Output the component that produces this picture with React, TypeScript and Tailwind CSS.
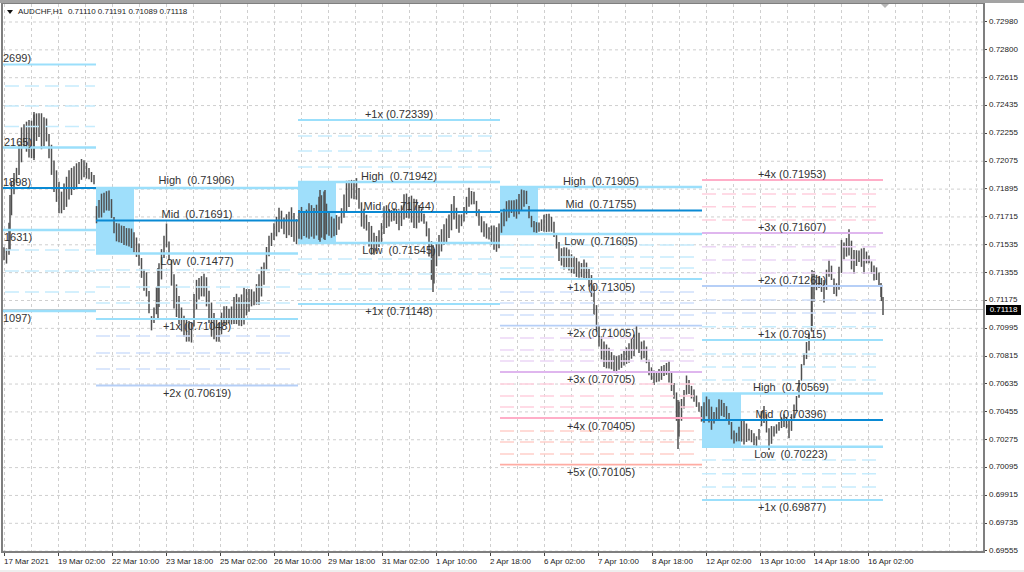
// App.tsx - AUDCHF H1 chart with session range levels
import React from 'react';

const FONT = "[font-family:'Liberation_Sans',Arial,sans-serif]";

const PRICES = ['0.72980', '0.72800', '0.72615', '0.72435', '0.72255', '0.72075', '0.71895', '0.71715', '0.71535', '0.71355', '0.71175', '0.70995', '0.70815', '0.70635', '0.70455', '0.70275', '0.70095', '0.69915', '0.69735', '0.69555'];
const DATES = ['17 Mar 2021', '19 Mar 02:00', '22 Mar 10:00', '23 Mar 18:00', '25 Mar 02:00', '26 Mar 10:00', '29 Mar 18:00', '31 Mar 02:00', '1 Apr 10:00', '2 Apr 18:00', '6 Apr 02:00', '7 Apr 10:00', '8 Apr 18:00', '12 Apr 02:00', '13 Apr 10:00', '14 Apr 18:00', '16 Apr 02:00'];

// x, top, bottom of the price action, read off the chart
const TRACE: [number, number, number][] = [
  [4, 245, 262], [8, 248, 265], [10, 195, 250], [12, 170, 205], [16, 170, 188], [20, 130, 175], [24, 120, 150], [28, 118, 160], [34, 112, 160], [38, 110, 135], [42, 112, 155], [46, 115, 140], [50, 135, 170], [54, 160, 195], [58, 175, 215], [62, 190, 217], [66, 175, 210], [72, 165, 195], [76, 160, 190], [80, 158, 185], [84, 157, 180], [88, 165, 180], [94, 175, 185],
  [96, 205, 225], [100, 195, 220], [104, 190, 215], [110, 188, 212], [115, 222, 240], [124, 225, 248], [133, 228, 250], [135, 230, 255], [140, 245, 270], [143, 265, 290], [147, 270, 300], [150, 295, 325], [152, 320, 336], [155, 300, 320], [158, 268, 318], [163, 240, 265], [166, 218, 245], [170, 245, 270], [173, 270, 310], [177, 285, 320], [182, 305, 335], [186, 318, 345], [192, 320, 345], [195, 280, 320], [200, 277, 297], [205, 270, 300], [210, 290, 335], [213, 305, 340], [218, 325, 345], [222, 310, 335], [225, 300, 325], [230, 310, 325], [236, 288, 325], [240, 300, 328], [244, 285, 328], [250, 287, 310], [255, 290, 305], [260, 270, 305], [264, 260, 285], [268, 235, 265], [272, 230, 245], [276, 215, 240], [280, 205, 230], [284, 215, 235], [288, 210, 240], [292, 203, 240], [296, 220, 245],
  [300, 205, 240], [305, 210, 240], [310, 200, 240], [315, 205, 240], [320, 190, 242], [325, 190, 240], [330, 215, 240], [335, 215, 240], [340, 215, 230], [346, 178, 215], [352, 180, 200], [357, 175, 200], [362, 205, 230], [366, 212, 230], [370, 220, 255], [376, 235, 255], [381, 225, 245], [385, 200, 235], [390, 210, 225], [395, 205, 220], [400, 210, 235], [404, 190, 220], [410, 195, 220], [415, 195, 235], [420, 205, 220], [425, 215, 225], [430, 230, 270], [433, 245, 292], [437, 240, 265], [442, 225, 250], [448, 215, 245], [454, 195, 220], [458, 215, 235], [463, 212, 225], [468, 186, 210], [474, 190, 205], [478, 205, 225], [484, 220, 238], [488, 225, 240], [494, 225, 250], [498, 225, 253],
  [502, 210, 235], [507, 200, 220], [512, 198, 215], [516, 200, 220], [522, 188, 210], [527, 190, 205], [530, 212, 225], [535, 222, 235], [540, 222, 232], [545, 212, 235], [548, 212, 232], [553, 215, 235], [556, 232, 248], [560, 245, 268], [565, 245, 270], [570, 250, 272], [575, 255, 278], [580, 262, 280], [585, 258, 280], [590, 270, 290], [595, 285, 325], [598, 320, 340], [601, 335, 360], [604, 340, 370], [608, 345, 372], [612, 352, 372], [616, 355, 375], [620, 355, 370], [624, 350, 368], [628, 345, 365], [632, 335, 360], [637, 325, 350], [641, 340, 360], [645, 337, 360], [650, 365, 380], [654, 368, 385], [658, 370, 383], [662, 365, 380], [666, 362, 375], [670, 360, 390], [673, 380, 395], [676, 385, 415], [678, 400, 449], [682, 397, 420], [687, 373, 393], [692, 385, 400], [695, 390, 405], [698, 400, 410], [701, 405, 420],
  [703, 400, 430], [707, 393, 417], [711, 403, 435], [715, 412, 422], [720, 393, 420], [723, 400, 417], [728, 407, 422], [733, 427, 447], [737, 433, 442], [743, 413, 447], [748, 427, 440], [753, 430, 445], [758, 438, 448], [760, 418, 433], [763, 400, 420], [766, 410, 430], [769, 427, 452], [773, 425, 440], [778, 423, 432], [783, 413, 427], [787, 417, 430], [790, 420, 443], [793, 407, 423], [797, 393, 410], [800, 370, 393], [803, 355, 370], [807, 340, 360], [810, 327, 350], [812, 270, 327], [815, 270, 293], [820, 277, 287], [824, 277, 303], [828, 263, 283], [830, 255, 275], [835, 283, 300], [838, 280, 297], [841, 238, 277], [845, 243, 257], [849, 228, 257], [853, 248, 280], [858, 250, 260], [864, 247, 275], [868, 252, 260], [873, 263, 280], [878, 267, 283], [881, 283, 297], [883, 297, 315],
];

// small seeded generator so the bars come out the same every time
const rand = (seed: number) => {
  const s = Math.sin(seed * 127.1) * 43758.5453;
  return s - Math.floor(s);
};

const buildBars = () => {
  const bars: { x: number; t: number; b: number }[] = [];
  let i = 0;
  for (let x = 4; x <= 883; x += 2.5) {
    while (i < TRACE.length - 2 && TRACE[i + 1][0] < x) i++;
    const [x0, t0, b0] = TRACE[i];
    const [x1, t1, b1] = TRACE[i + 1];
    const k = Math.min(1, Math.max(0, (x - x0) / (x1 - x0)));
    const t = t0 + (t1 - t0) * k;
    const b = b0 + (b1 - b0) * k;
    const span = b - t;
    bars.push({ x, t: t + rand(x) * span * 0.15, b: b - rand(x + 3.7) * span * 0.15 });
  }
  // keep the long wicks and the last bars where they really are
  TRACE.filter(([x, t, b]) => b - t > 45 || x > 878).forEach(([x, t, b]) => bars.push({ x, t, b }));
  return bars;
};

const SKY = '#9bdffb';
const SKY_D = '#c6ecfd';
const MID = '#0a8ad4';
const PERI = '#b6cff7';
const PERI_D = '#cfe0fb';
const LILAC = '#dfb6ee';
const LILAC_D = '#ecd6f6';
const PINK = '#ffaec8';
const PINK_D = '#ffd0de';
const SALMON = '#ffaca3';
const SALMON_D = '#ffcfca';

type Col = {
  x1: number;
  x2: number;
  dashEnd: number;
  box?: [number, number, number, number];
  solid: [number, string, number][];
  dashed: [number, string][];
};

const COLS: Col[] = [
  {
    x1: -115, x2: 96, dashEnd: 95,
    solid: [[64.5, SKY, 1.8], [147.5, SKY, 2.4], [188, MID, 1.8], [230, SKY, 2.4], [311, SKY, 2.4]],
    dashed: [[86, SKY_D], [106, SKY_D], [126.5, SKY_D], [250, SKY_D], [271, SKY_D], [292, SKY_D]],
  },
  {
    x1: 96, x2: 298, dashEnd: 292, box: [96, 188, 134, 254],
    solid: [[188, SKY, 2.4], [220.5, MID, 1.8], [253.5, SKY, 2.4], [319, SKY, 1.8], [385.5, PERI, 1.8]],
    dashed: [[270, SKY_D], [287, SKY_D], [303, SKY_D], [336, PERI_D], [353, PERI_D], [369, PERI_D]],
  },
  {
    x1: 298, x2: 500, dashEnd: 494, box: [298, 182, 336, 243],
    solid: [[120, SKY, 1.8], [182, SKY, 2.4], [212, MID, 1.8], [243, SKY, 2.4], [304, SKY, 1.8]],
    dashed: [[136, SKY_D], [151, SKY_D], [167, SKY_D], [259, SKY_D], [274, SKY_D], [289, SKY_D]],
  },
  {
    x1: 500, x2: 702, dashEnd: 696, box: [500, 187, 538, 235],
    solid: [[187, SKY, 2.4], [210.5, MID, 1.8], [234, SKY, 2.4], [279, SKY, 1.8], [325.7, PERI, 1.8], [372, LILAC, 1.8], [418, PINK, 1.8], [464.7, SALMON, 1.8]],
    dashed: [[245, SKY_D], [257, SKY_D], [268, SKY_D], [292, PERI_D], [303, PERI_D], [315, PERI_D], [338, LILAC_D], [350, LILAC_D], [361, LILAC_D], [384, PINK_D], [396, PINK_D], [407, PINK_D], [431, SALMON_D], [442, SALMON_D], [454, SALMON_D]],
  },
  {
    x1: 702, x2: 883, dashEnd: 879, box: [702, 393, 741, 447],
    solid: [[180, PINK, 1.8], [233, LILAC, 1.8], [286, PERI, 1.8], [340, SKY, 1.8], [393.5, SKY, 2.4], [420, MID, 1.8], [446.7, SKY, 2.4], [500, SKY, 1.8]],
    dashed: [[194, PINK_D], [206.7, PINK_D], [220, PINK_D], [246.7, LILAC_D], [260, LILAC_D], [273, LILAC_D], [300, PERI_D], [313, PERI_D], [326.7, SKY_D], [354, SKY_D], [367, SKY_D], [380, SKY_D], [460, SKY_D], [473.7, SKY_D], [487, SKY_D]],
  },
];

// centre x, centre y, text - the first five are what is left of labels running off the left edge
const LABELS: [number, number, string][] = [
  [17, 58, '2699)'], [18, 142, '2165)'], [17, 182, '1898)'], [18, 237, '1631)'], [17, 318, '1097)'],
  [196.5, 180, 'High  (0.71906)'], [197, 214, 'Mid  (0.71691)'], [197, 260.5, 'Low  (0.71477)'], [197, 326, '+1x (0.71048)'], [197, 392.5, '+2x (0.70619)'],
  [399, 114, '+1x (0.72339)'], [399, 176, 'High  (0.71942)'], [399, 206, 'Mid  (0.71744)'], [399, 250, 'Low  (0.71545)'], [399, 311, '+1x (0.71148)'],
  [601, 180.5, 'High  (0.71905)'], [601, 204, 'Mid  (0.71755)'], [601, 241, 'Low  (0.71605)'], [601, 286.5, '+1x (0.71305)'], [601, 332.5, '+2x (0.71005)'], [601, 379, '+3x (0.70705)'], [601, 425.5, '+4x (0.70405)'], [601, 472, '+5x (0.70105)'],
  [792, 174, '+4x (0.71953)'], [792, 227, '+3x (0.71607)'], [792, 280, '+2x (0.71261)'], [792, 334, '+1x (0.70915)'], [791, 387, 'High  (0.70569)'], [791, 414, 'Mid  (0.70396)'], [791, 454, 'Low  (0.70223)'], [792, 507, '+1x (0.69877)'],
];

const GRID_X = Array.from({ length: 37 }, (_, i) => 4 + 27 * i);
const GRID_Y = PRICES.map((_, i) => 22 + 27.85 * i);

const Chart = () => {
  const bars = buildBars();
  return (
    <svg viewBox="3 4 980 547" width={980} height={547} className="block">
      {GRID_X.map((x) => (
        <line key={x} x1={x + 0.5} x2={x + 0.5} y1={4} y2={551} stroke="#cfcfcf" strokeDasharray="3 3" />
      ))}
      {GRID_Y.map((y) => (
        <line key={y} x1={3} x2={983} y1={y} y2={y} stroke="#cfcfcf" strokeDasharray="3 3" />
      ))}
      <line x1={3} x2={983} y1={309.5} y2={309.5} stroke="#c9c9c9" />
      {COLS.map((c) =>
        c.box ? (
          <rect key={c.x1} x={c.box[0]} y={c.box[1]} width={c.box[2] - c.box[0]} height={c.box[3] - c.box[1]} fill="#9fdffb" />
        ) : null,
      )}
      {bars.map((b, i) => (
        <line key={i} x1={b.x} x2={b.x} y1={b.t} y2={b.b} stroke="#4f4f4f" strokeWidth={1.5} />
      ))}
      {COLS.map((c) => (
        <g key={c.x1}>
          {c.dashed.map(([y, color]) => (
            <line key={y} x1={c.x1} x2={c.dashEnd} y1={y} y2={y} stroke={color} strokeWidth={1.5} strokeDasharray="14 6" />
          ))}
          {c.solid.map(([y, color, w]) => (
            <line key={y} x1={c.x1} x2={c.x2} y1={y} y2={y} stroke={color} strokeWidth={w} />
          ))}
        </g>
      ))}
      {LABELS.map(([x, y, text]) => (
        <text key={text} x={x} y={y + 4} textAnchor="middle" fill="#333333" fontSize={11} className="whitespace-pre">
          {text}
        </text>
      ))}
      <polygon points="881,4 889,4 885,8" fill="#b5b5b5" />
    </svg>
  );
};

export default function App() {
  return (
    <div className={`w-[1024px] h-[572px] bg-white flex flex-col overflow-hidden ${FONT}`}>
      <div className="h-[3px] bg-[#a3a3a3]" />
      <div className="flex flex-1 min-h-0">
        <div className="w-[985px] pl-px flex flex-col shrink-0">
          {/* plot area */}
          <div className="relative h-[550px] w-[984px] border-l-2 border-r-2 border-b-2 border-t border-[#7f7f7f] overflow-hidden">
            <Chart />
            <div className="absolute left-[4px] top-[3px] flex items-center gap-[5px] text-[8px] leading-[10px] text-[#222] whitespace-pre">
              <svg width="6" height="4" viewBox="0 0 6 4" className="mr-[-1px]">
                <polygon points="0,0 6,0 3,4" fill="#111" />
              </svg>
              <span className="pl-[1px]">AUDCHF,H1</span>
              <span>0.71110 0.71191 0.71089 0.71118</span>
            </div>
          </div>
          {/* time scale */}
          <div className="flex pl-[3px]">
            {DATES.map((d) => (
              <div key={d} className="w-[54px] shrink-0 flex flex-col">
                <div className="h-[3px] w-px bg-[#444]" />
                <span className="text-[8px] leading-[12px] text-[#222] whitespace-nowrap">{d}</span>
              </div>
            ))}
          </div>
        </div>
        {/* price scale */}
        <div className="relative flex-1 flex flex-col pt-[5px]">
          {PRICES.map((p) => (
            <div key={p} className="h-[27.85px] shrink-0 flex items-center">
              <div className="h-px w-[2px] bg-[#444]" />
              <span className="pl-[2px] text-[8px] leading-none text-[#222]">{p}</span>
            </div>
          ))}
          <div className="absolute left-[1px] top-[302px] h-[10px] w-[35px] bg-black text-white text-[8px] leading-[10px] text-center">0.71118</div>
        </div>
      </div>
      <div className="h-[2px] bg-[#eeeeee]" />
    </div>
  );
}
